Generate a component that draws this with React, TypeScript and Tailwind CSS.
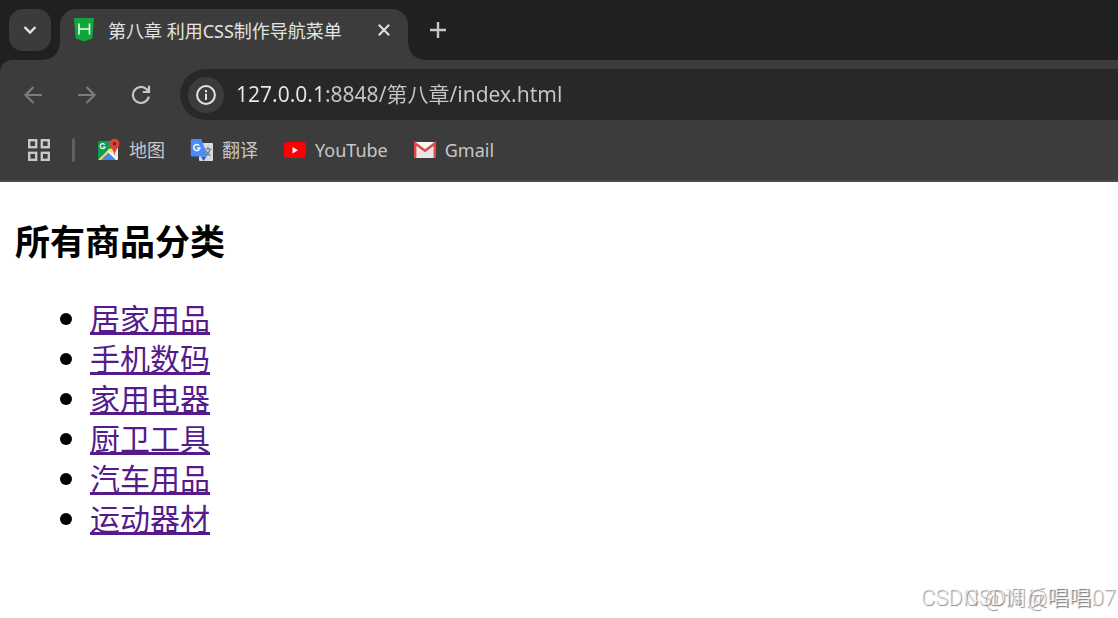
/**
 * Browser window showing the category list page.
 *
 * The top half is the browser chrome (tab strip, toolbar, bookmarks bar),
 * the bottom half is the page itself with default-looking list styles.
 */

import React from 'react';

// ── Data ───────────────────────────────────────────────────────────────────

const CATEGORIES = ['居家用品', '手机数码', '家用电器', '厨卫工具', '汽车用品', '运动器材'];

const WATERMARKS = ['CSDN @调反唱唱07', 'CSDN @唱唱.'];

// ── Icons ──────────────────────────────────────────────────────────────────

function HBuilderIcon() {
  return (
    <svg viewBox="0 0 20 24" className="h-6 w-5" aria-hidden="true">
      <path d="M0 0h20l-1.6 20.6L10 23.4 1.6 20.6z" fill="#12a53c" />
      <path d="M5 5.5v11M15.5 5.5v11M5 11h10.5" stroke="#e9fff0" strokeWidth="1.6" fill="none" />
    </svg>
  );
}

function AppsIcon() {
  return (
    <svg viewBox="0 0 22 22" className="size-[22px]" fill="none" stroke="#c7c7c7" strokeWidth="2.4" aria-hidden="true">
      <rect x="1.2" y="1.2" width="7" height="7" />
      <rect x="13.8" y="1.2" width="7" height="7" />
      <rect x="1.2" y="13.8" width="7" height="7" />
      <rect x="13.8" y="13.8" width="7" height="7" />
    </svg>
  );
}

function MapsIcon() {
  return (
    <svg viewBox="0 0 24 24" className="size-6" aria-hidden="true">
      <clipPath id="maps-tile">
        <rect x="1" y="3" width="20" height="19" rx="1.5" />
      </clipPath>
      <g clipPath="url(#maps-tile)">
        <rect x="1" y="3" width="20" height="19" fill="#109d58" />
        <path d="M11 12l10 10V8z" fill="#e8e8e8" />
        <path d="M1 22L13 10l3 3L7 22z" fill="#ffd94a" />
        <path d="M3 23l8.5-8.5L20 23z" fill="#4487f4" />
        <path d="M10.5 13.5l1.2-1.2L22 22.5h-2.5z" fill="#fff" />
      </g>
      <path d="M7.6 6.6A2.5 2.5 0 1 0 8 9H5.8" fill="none" stroke="#fff" strokeWidth="1.1" />
      <path d="M17.5 0.8a5 5 0 0 0-5 5c0 4 4.2 4.8 5 12 .8-7.2 5-8 5-12a5 5 0 0 0-5-5z" fill="#dc4236" />
      <circle cx="17.5" cy="5.8" r="1.8" fill="#76231c" />
    </svg>
  );
}

function TranslateIcon() {
  return (
    <svg viewBox="0 0 24 24" className="size-6" aria-hidden="true">
      <rect x="9" y="5" width="14" height="18" rx="1" fill="#dadada" />
      <path d="M11 18.5h5.5L13.5 23z" fill="#2a56c6" />
      <path d="M2 1h9.5l6 17.5H2a1.2 1.2 0 0 1-1.2-1.2V2.200A1.2 1.2 0 0 1 2 1z" fill="#4b8bf5" />
      <path d="M9.3 7.6A3.1 3.1 0 1 0 9.9 10H7" fill="none" stroke="#fff" strokeWidth="1.5" />
      <path
        d="M14.5 11h7M18 9v2M20.2 11c-.8 3-2.3 5-4.2 6.5M15.8 12.5c.9 2 2.5 3.8 4.7 5.2"
        fill="none"
        stroke="#607988"
        strokeWidth="1.2"
      />
    </svg>
  );
}

function YouTubeIcon() {
  return (
    <svg viewBox="0 0 24 24" className="size-6" aria-hidden="true">
      <rect x="1" y="4" width="22" height="16" rx="3" fill="#fe0000" />
      <path d="M9.5 9v6.4l5.4-3.2z" fill="#fff" />
    </svg>
  );
}

function GmailIcon() {
  return (
    <svg viewBox="0 0 24 24" className="size-6" aria-hidden="true">
      <rect x="1" y="4" width="22" height="16" rx="1.5" fill="#e6e6e6" />
      <path d="M3 4h18l-9 7z" fill="#f7f7f7" />
      <path d="M2.2 20V5.5L12 12.8l9.800-7.300V20" fill="none" stroke="#de4a43" strokeWidth="2.4" />
    </svg>
  );
}

const BOOKMARKS = [
  { label: '地图', Icon: MapsIcon },
  { label: '翻译', Icon: TranslateIcon },
  { label: 'YouTube', Icon: YouTubeIcon },
  { label: 'Gmail', Icon: GmailIcon },
];

// ── Browser chrome ─────────────────────────────────────────────────────────

function TabStrip() {
  return (
    <div className="flex h-[60px] items-start bg-[#1f2120] pt-[9px] pl-[9px]">
      <button
        type="button"
        aria-label="Search tabs"
        className="flex size-[42px] items-center justify-center rounded-[14px] bg-[#3a3c3b]"
      >
        <svg viewBox="0 0 14 10" className="h-2.5 w-3.5" fill="none" stroke="#e3e3e3" strokeWidth="2.4" aria-hidden="true">
          <path d="M1.5 2L7 7.5 12.5 2" />
        </svg>
      </button>
      <div className="relative ml-[9px] flex h-[51px] w-[348px] items-start rounded-t-2xl bg-[#3c3c3c] pt-[9px] pr-3 pl-3.5">
        {/* Flared feet where the tab meets the toolbar */}
        <span className="absolute bottom-0 -left-4 size-4 bg-[radial-gradient(circle_at_0_0,transparent_15px,#3c3c3c_16px)]" />
        <span className="absolute -right-4 bottom-0 size-4 bg-[radial-gradient(circle_at_100%_0,transparent_15px,#3c3c3c_16px)]" />
        <HBuilderIcon />
        <span className="ml-3.5 flex-1 truncate text-lg leading-[26px] text-[#e3e3e3]">第八章 利用CSS制作导航菜单</span>
        <button type="button" aria-label="Close tab" className="flex size-6 items-center justify-center">
          <svg viewBox="0 0 12 12" className="size-3" stroke="#e3e3e3" strokeWidth="2" aria-hidden="true">
            <path d="M.8.8l10.4 10.4M11.2.8L.8 11.2" />
          </svg>
        </button>
      </div>
      <button type="button" aria-label="New tab" className="ml-[9px] flex size-[42px] items-center justify-center">
        <svg viewBox="0 0 16 16" className="size-4" stroke="#c7c7c7" strokeWidth="2.4" aria-hidden="true">
          <path d="M8 0v16M0 8h16" />
        </svg>
      </button>
    </div>
  );
}

function Toolbar() {
  return (
    <div className="flex items-center pt-[9px]">
      <div className="flex w-[180px] items-center gap-[30px] pl-[21px]">
        <button type="button" aria-label="Back" className="flex size-6 items-center justify-center">
          <svg viewBox="0 0 18 18" className="size-[18px]" fill="none" stroke="#7c7c7c" strokeWidth="2.2" aria-hidden="true">
            <path d="M9.5 1L1.5 9l8 8M1.5 9H18" />
          </svg>
        </button>
        <button type="button" aria-label="Forward" className="flex size-6 items-center justify-center">
          <svg viewBox="0 0 18 18" className="size-[18px]" fill="none" stroke="#7c7c7c" strokeWidth="2.2" aria-hidden="true">
            <path d="M8.5 1l8 8-8 8M16.5 9H0" />
          </svg>
        </button>
        <button type="button" aria-label="Reload" className="flex size-6 items-center justify-center">
          <svg viewBox="0 0 20 20" className="size-5" fill="none" stroke="#c7c7c7" strokeWidth="2.2" aria-hidden="true">
            <path d="M17.8 11.6A8 8 0 1 1 15.6 4.300L18 6.8M18 .8v6.200h-6.200" />
          </svg>
        </button>
      </div>
      <div className="flex h-[51px] flex-1 items-center rounded-l-full bg-[#282828] pl-2">
        <button
          type="button"
          aria-label="View site information"
          className="flex size-9 items-center justify-center rounded-full bg-[#3c3c3c]"
        >
          <svg viewBox="0 0 20 20" className="size-5" aria-hidden="true">
            <circle cx="10" cy="10" r="8.9" fill="none" stroke="#e3e3e3" strokeWidth="2" />
            <path d="M10 8.8V15M10 5v2.2" stroke="#e3e3e3" strokeWidth="2" />
          </svg>
        </button>
        {/* The host part of the address is brighter than the path */}
        <input
          type="text"
          aria-label="Address"
          defaultValue="127.0.0.1:8848/第八章/index.html"
          className="ml-3 min-w-0 flex-1 bg-[linear-gradient(to_right,#e8e8e8_88px,#c7c7c7_88px)] bg-clip-text text-[21px] text-transparent outline-none"
        />
      </div>
    </div>
  );
}

function BookmarksBar() {
  return (
    <nav aria-label="Bookmarks" className="flex h-[60px] items-center pl-7">
      <button type="button" aria-label="Apps">
        <AppsIcon />
      </button>
      <span className="mx-[22px] h-6 w-[3px] rounded-full bg-[#5f5f5f]" />
      <ul className="flex items-center gap-[25px]">
        {BOOKMARKS.map(({ label, Icon }) => (
          <li key={label}>
            <a href="#" className="flex items-center gap-2 text-lg leading-7 text-[#c7c7c7]">
              <Icon />
              {label}
            </a>
          </li>
        ))}
      </ul>
    </nav>
  );
}

// ── Page ───────────────────────────────────────────────────────────────────

function CategoryPage() {
  return (
    <main className="relative flex-1 bg-white px-[15px] pt-[34px] font-['Noto_Sans_CJK_SC',sans-serif] text-black">
      <h2 className="text-[35px] leading-[48px] font-bold">所有商品分类</h2>
      <ul className="mt-[33px] list-disc pl-[75px] text-[30px] leading-10">
        {CATEGORIES.map((name) => (
          <li key={name}>
            <a href="#" className="text-[#551a8b] underline decoration-[3px]">
              {name}
            </a>
          </li>
        ))}
      </ul>
      {/* Two stamps printed over one another in the corner */}
      {WATERMARKS.map((mark, index) => (
        <span
          key={mark}
          className={`absolute bottom-1 font-[Roboto,'Noto_Sans_CJK_SC',sans-serif] text-[22px] leading-8 font-light whitespace-nowrap text-white/70 [text-shadow:1px_1px_1px_#888] ${
            index === 0 ? 'right-0.5' : 'right-[22px]'
          }`}
        >
          {mark}
        </span>
      ))}
    </main>
  );
}

export default function App(): React.ReactElement {
  return (
    <div className="flex min-h-screen flex-col bg-white font-['Noto_Sans','Noto_Sans_CJK_SC',sans-serif]">
      <header className="bg-[#1f2120]">
        <TabStrip />
        <div className="rounded-tl-xl border-b-2 border-[#4a4a4a] bg-[#3c3c3c]">
          <Toolbar />
          <BookmarksBar />
        </div>
      </header>
      <CategoryPage />
    </div>
  );
}
